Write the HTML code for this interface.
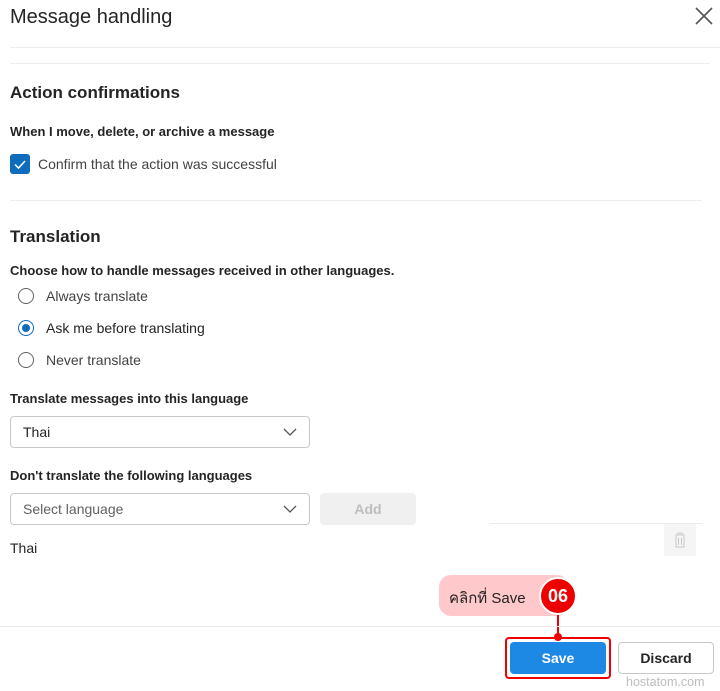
<!DOCTYPE html>
<html><head><meta charset="utf-8"><style>
*{margin:0;padding:0;box-sizing:border-box}
body{width:720px;height:691px;background:#fff;font-family:"Liberation Sans",sans-serif;color:#242424;position:relative;overflow:hidden}
.a{position:absolute;white-space:nowrap}
.hl{position:absolute;height:1px;background:#ebebeb}
.sel{position:absolute;height:32px;border:1px solid #c8c8c8;border-radius:4px;font-size:14px;padding:7px 12px}
.sel svg{position:absolute;right:12px;top:10px}
.radio{position:absolute;left:18px;width:16px;height:16px;border:1px solid #616161;border-radius:50%}
.lb{font-size:13px;font-weight:bold}
</style></head><body>
<div class="a" style="left:10px;top:6px;font-size:20px;">Message handling</div>
<svg class="a" style="left:695px;top:7px" width="18" height="18"><path d="M1 1L17 17M17 1L1 17" stroke="#555" stroke-width="1.6"/></svg>
<div class="hl" style="left:10px;top:47px;width:710px"></div>
<div class="hl" style="left:10px;top:63px;width:700px"></div>
<div class="a" style="left:10px;top:83px;font-size:17px;font-weight:bold;color:#242424">Action confirmations</div>
<div class="a lb" style="left:10px;top:124px">When I move, delete, or archive a message</div>
<div class="a" style="left:10px;top:154px;width:20px;height:20px;background:#0f6cbd;border-radius:3px"><svg width="20" height="20"><path d="M5 10.5L8.5 14L15 7" stroke="#fff" stroke-width="1.5" fill="none"/></svg></div>
<div class="a" style="left:38px;top:156px;font-size:14px;color:#424242">Confirm that the action was successful</div>
<div class="hl" style="left:10px;top:200px;width:692px"></div>
<div class="a" style="left:10px;top:227px;font-size:17px;font-weight:bold">Translation</div>
<div class="a lb" style="left:10px;top:263px">Choose how to handle messages received in other languages.</div>
<div class="radio" style="top:288px"></div><div class="a" style="left:46px;top:288px;font-size:14px;color:#424242">Always translate</div>
<div class="radio" style="top:320px;border-color:#0f6cbd"><div style="margin:3px;width:8px;height:8px;border-radius:50%;background:#0f6cbd"></div></div><div class="a" style="left:46px;top:320px;font-size:14px">Ask me before translating</div>
<div class="radio" style="top:352px"></div><div class="a" style="left:46px;top:352px;font-size:14px;color:#424242">Never translate</div>
<div class="a lb" style="left:10px;top:391px">Translate messages into this language</div>
<div class="sel" style="left:10px;top:416px;width:300px">Thai<svg width="14" height="10"><path d="M1 2L7 8L13 2" stroke="#555" fill="none" stroke-width="1.3"/></svg></div>
<div class="a lb" style="left:10px;top:468px">Don't translate the following languages</div>
<div class="sel" style="left:10px;top:493px;width:300px;color:#616161">Select language<svg width="14" height="10"><path d="M1 2L7 8L13 2" stroke="#555" fill="none" stroke-width="1.3"/></svg></div>
<div class="a" style="left:320px;top:493px;width:96px;height:32px;background:#f0f0f0;border-radius:4px;text-align:center;line-height:32px;font-size:14px;font-weight:bold;color:#bdbdbd">Add</div>
<div class="hl" style="left:490px;top:523px;width:212px"></div>
<div class="a" style="left:664px;top:524px;width:32px;height:32px;background:#f5f5f5"><svg width="32" height="32"><path d="M11 11H21M14 11V9H18V11M12 12V23H20V12M14.5 14V21M17.5 14V21" stroke="#c8c8c8" fill="none"/></svg></div>
<div class="a" style="left:10px;top:540px;font-size:14px">Thai</div>
<div class="a" style="left:439px;top:575px;width:130px;height:41px;background:#ffc9cc;border-radius:12px;font-family:'Liberation Sans','Noto Sans CJK SC',sans-serif;font-size:15px;padding:11px 10px;color:#222">คลิกที่ Save</div>
<div class="a" style="left:539px;top:577px;width:38px;height:38px;border-radius:50%;background:#e00;border:2px solid #fff;color:#fff;font-weight:bold;font-size:18px;text-align:center;line-height:34px">06</div>
<div class="a" style="left:557px;top:615px;width:2px;height:22px;background:#e00"></div>
<div class="a" style="left:554px;top:633px;width:8px;height:8px;border-radius:50%;background:#e00"></div>
<div class="hl" style="left:0;top:626px;width:720px"></div>
<div class="a" style="left:505px;top:637px;width:106px;height:42px;border:2px solid #e00;border-radius:4px"></div>
<div class="a" style="left:510px;top:642px;width:96px;height:32px;background:#1e88e5;border-radius:4px;color:#fff;font-weight:bold;font-size:14px;text-align:center;line-height:32px">Save</div>
<div class="a" style="left:618px;top:642px;width:96px;height:32px;border:1px solid #c8c8c8;border-radius:4px;font-weight:bold;font-size:14px;text-align:center;line-height:30px">Discard</div>
<div class="a" style="left:626px;top:675px;font-size:12.5px;color:#bdbdbd">hostatom.com</div>
</body></html>
